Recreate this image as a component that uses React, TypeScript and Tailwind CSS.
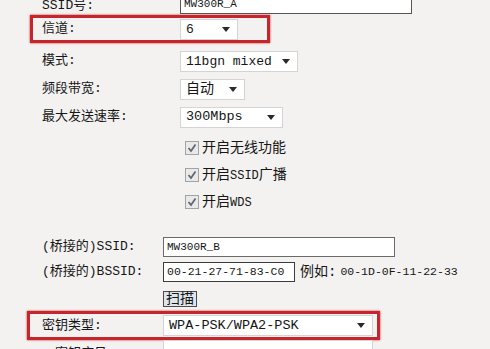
import { ReactNode } from "react";

const FONT = "[font-family:'Liberation_Mono','Noto_Sans_CJK_SC',monospace]";

function Arrow() {
  return (
    <svg width="8" height="5" viewBox="0 0 8 5" className="shrink-0">
      <path d="M0 0 H8 L4 5 Z" fill="#2a2a2a" />
    </svg>
  );
}

function Select({ value, width, textSize = "text-[13px]" }: { value: string; width: string; textSize?: string }) {
  return (
    <div
      className={`flex items-center justify-between h-[21px] ${width} bg-white border border-[#d4d4d4] pl-[5px] pr-[7px] ${textSize}`}
    >
      <span className="leading-none whitespace-pre">{value}</span>
      <Arrow />
    </div>
  );
}

function TextBox({ value, width, textSize = "text-[12px]", border = "border-[#6a6a6a]" }: { value: string; width: string; textSize?: string; border?: string }) {
  return (
    <div className={`flex items-center h-[20px] ${width} bg-white border ${border} pl-[3px] ${textSize}`}>
      <span className="leading-none">{value}</span>
    </div>
  );
}

function Checkbox({ label }: { label: ReactNode }) {
  return (
    <div className="flex items-center h-[27px] pl-[185px] gap-[3px]">
      <span className="flex items-center justify-center w-[14px] h-[14px] border border-[#a3a3a3] bg-[#e9e9e9]">
        <svg width="10" height="10" viewBox="0 0 10 10">
          <path d="M1.5 5 L4 8 L8.5 1.5" fill="none" stroke="#5f6a74" strokeWidth="1.8" />
        </svg>
      </span>
      <span className="text-[14px] leading-none">{label}</span>
    </div>
  );
}

export default function App() {
  return (
    <div className={`w-[490px] h-[349px] overflow-hidden bg-[#f3f2f1] text-[#161616] ${FONT}`}>
      {/* SSID, cut at the top */}
      <div className="flex items-center h-[22px] -mt-[7px] pl-[42px] text-[13px]">
        <span className="w-[138px] pt-[4px]">SSID号:</span>
        <TextBox value="MW300R_A" width="w-[232px]" textSize="text-[11px]" border="border-[#555]" />
      </div>

      {/* channel, boxed in red */}
      <div className="flex items-center ml-[30px] w-[240px] h-[28px] border-[3px] border-[#c4262c] shadow-[0_0_2px_#c4262c] pl-[9px] text-[13px]">
        <span className="w-[138px]">信道:</span>
        <Select value="6" width="w-[58px]" />
      </div>

      <div className="flex items-center h-[28px] mt-[4px] pl-[42px] text-[13px]">
        <span className="w-[138px]">模式:</span>
        <Select value="11bgn mixed" width="w-[118px]" />
      </div>
      <div className="flex items-center h-[28px] pl-[42px] text-[13px]">
        <span className="w-[138px]">频段带宽:</span>
        <Select value="自动" width="w-[65px]" textSize="text-[14px]" />
      </div>
      <div className="flex items-center h-[28px] pl-[42px] text-[13px]">
        <span className="w-[138px]">最大发送速率:</span>
        <Select value="300Mbps" width="w-[103px]" textSize="text-[13.5px]" />
      </div>

      <div className="mt-[3px]">
        <Checkbox label="开启无线功能" />
        <Checkbox label={<>开启<span className="text-[12px]">SSID</span>广播</>} />
        <Checkbox label={<>开启<span className="text-[12px]">WDS</span></>} />
      </div>

      {/* WDS bridge settings */}
      <div className="flex items-center h-[20px] mt-[22px] pl-[42px] text-[13px]">
        <span className="w-[121px]">(桥接的)SSID:</span>
        <TextBox value="MW300R_B" width="w-[232px]" textSize="text-[11px]" />
      </div>
      <div className="flex items-center h-[20px] mt-[5px] pl-[42px] text-[13px]">
        <span className="w-[121px]">(桥接的)BSSID:</span>
        <TextBox value="00-21-27-71-83-C0" width="w-[132px]" textSize="text-[11.5px]" border="border-[#3c3c3c]" />
        <span className="ml-[5px] text-[14px]">例如:</span>
        <span className="ml-[4px] text-[11.5px]">00-1D-0F-11-22-33</span>
      </div>
      <div className="flex h-[16px] mt-[9px] pl-[163px]">
        <div className="flex items-center px-[2px] border border-[#4a4a4a] bg-[#dfe5ec] text-[14px] leading-none">扫描</div>
      </div>

      {/* key type, boxed in red */}
      <div className="flex items-center ml-[27px] w-[353px] h-[29px] mt-[4px] border-[3px] border-[#c4262c] shadow-[0_0_2px_#c4262c] pl-[12px] text-[13px]">
        <span className="w-[121px]">密钥类型:</span>
        <Select value="WPA-PSK/WPA2-PSK" width="w-[210px]" textSize="text-[13.5px]" />
      </div>

      <div className="flex items-start h-[20px] pl-[55px] text-[13px]">
        <span className="w-[108px] pt-[4px]">密钥序号:</span>
        <div className="h-[20px] w-[210px] bg-white border border-[#d4d4d4]" />
      </div>
    </div>
  );
}
